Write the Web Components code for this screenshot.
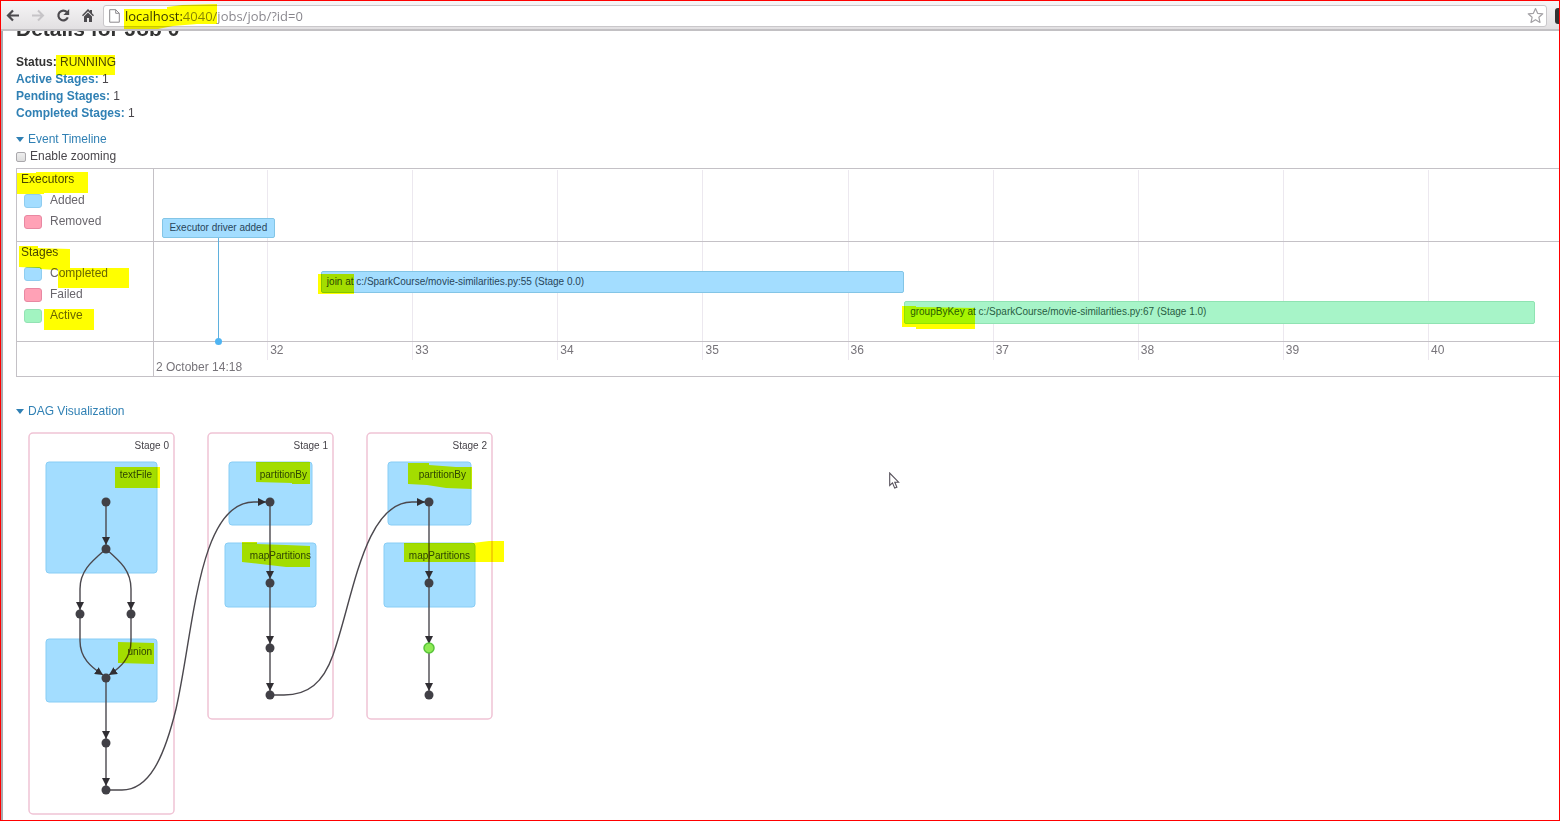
<!DOCTYPE html>
<html lang="en">
<head>
<meta charset="utf-8">
<title>Details for Job 0</title>
<style>
  body {
    margin: 0;
    background: #fff;
    color: #4a474c;
    font: 12px/17px "Liberation Sans", Arial, sans-serif;
  }
</style>
</head>
<body>
<spark-window>
  <browser-bar slot="bar" url="localhost:4040/jobs/job/?id=0"></browser-bar>
  <job-summary></job-summary>
  <fold-section label="Event Timeline">
    <event-timeline></event-timeline>
  </fold-section>
  <fold-section label="DAG Visualization" class="dag">
    <dag-graph></dag-graph>
  </fold-section>
</spark-window>

<script>
// Small base class: puts the markup into an open shadow root
class BaseElement extends HTMLElement {
  constructor() {
    super();
    this.attachShadow({ mode: 'open' });
  }

  connectedCallback() {
    this.shadowRoot.innerHTML = this.render();
  }
}

// Highlighter stroke over the text, blended like a real pen
class MarkerPen extends BaseElement {
  render() {
    return `
      <style>
        :host { position: absolute; left: 0; top: 0; mix-blend-mode: multiply; pointer-events: none; line-height: 0; }
        svg { width: 1px; height: 1px; overflow: visible; }
      </style>
      <svg aria-hidden="true"><polygon points="${this.getAttribute('points')}" fill="#ff0"/></svg>
    `;
  }
}

class SparkWindow extends BaseElement {
  render() {
    return `
      <style>
        :host { display: flex; flex-direction: column; height: 100vh; position: relative; overflow: hidden; }
        main { flex: 1; min-height: 0; overflow: hidden; margin-left: 1px; padding-left: 13px; border-left: 2px solid #aaa7ac; }
        .frame { position: absolute; inset: 0; border: 1px solid #f00; pointer-events: none; }
        .cursor { position: absolute; left: 889px; top: 472px; }
      </style>
      <slot name="bar"></slot>
      <main><slot></slot></main>
      <svg class="cursor" width="11" height="18" viewBox="0 0 11 18" aria-hidden="true">
        <path d="M.7 1v12.4l2.8-2.5 2.2 5.2 2.2-.9-2.1-5h3.8z" fill="#fff" stroke="#55505a" stroke-width="1.1"/>
      </svg>
      <div class="frame"></div>
    `;
  }
}

class BrowserBar extends BaseElement {
  render() {
    return `
      <style>
        :host {
          display: flex; align-items: center; gap: 8px; height: 31px; flex: none; box-sizing: border-box;
          padding: 2px 0 0 5px; background: linear-gradient(#f7f6f7, #e2e0e2); border-bottom: 2px solid #c2c0c3;
        }
        button { all: unset; display: flex; width: 17px; height: 17px; }
        .box {
          flex: 1; position: relative; display: flex; align-items: center; gap: 5px; height: 20px;
          border: 1px solid #c9c7ca; border-radius: 3px; background: #fff; padding: 0 2px 0 5px; margin-left: -2px;
        }
        input {
          all: unset; flex: 1; min-width: 0; height: 20px; font: 13px/20px "Open Sans", "Noto Sans", sans-serif;
          color: #777; -webkit-text-fill-color: transparent;
          background: linear-gradient(90deg, #333 58px, #85838a 58px);
          -webkit-background-clip: text; background-clip: text;
        }
        .ext { width: 5px; height: 16px; border-radius: 3px 0 0 3px; background: #333; }
        nav { display: flex; gap: 8px; }
      </style>
      <nav>
        <button aria-label="Back"><svg width="17" height="17" viewBox="0 0 17 17"><path d="M14 8.5H3M8 3.5l-5 5 5 5" fill="none" stroke="#4c4a4e" stroke-width="2.2"/></svg></button>
        <button aria-label="Forward"><svg width="17" height="17" viewBox="0 0 17 17"><path d="M2 8.5h11M8 3.5l5 5-5 5" fill="none" stroke="#c6c4c7" stroke-width="2"/></svg></button>
        <button aria-label="Reload"><svg width="17" height="17" viewBox="0 0 17 17"><path d="M12.8 10.4A4.9 4.9 0 1 1 11.8 5" fill="none" stroke="#4c4a4e" stroke-width="2.2"/><path d="M14.2 2v6H8.4z" fill="#4c4a4e"/></svg></button>
        <button aria-label="Home"><svg width="17" height="17" viewBox="0 0 17 17"><path d="M8 2 2 8.2l1 1 5-5 5 5 1-1-2-2V3h-2v1z M4 9.4V15h3v-4h2v4h3V9.4L8 5.6z" fill="#4c4a4e"/></svg></button>
      </nav>
      <div class="box">
        <svg width="11" height="14" viewBox="0 0 11 14"><path d="M.7.7h6l3.6 3.6v8.9H.7zM6.7.7v3.6h3.6" fill="none" stroke="#8b898d"/></svg>
        <input type="text" aria-label="Address" value="${this.getAttribute('url')}">
        <button aria-label="Bookmark"><svg width="17" height="17" viewBox="0 0 17 17"><path d="M8.5 1.5l2.1 4.8 5.2.5-3.9 3.5 1.1 5.1-4.5-2.7L4 15.4l1.1-5.1L1.2 6.8l5.2-.5z" fill="none" stroke="#a3a1a5" stroke-width="1.2" stroke-linejoin="round"/></svg></button>
        <marker-pen points="20,0 63,0 63,-2 78,-4 113,-5 113,15 93,15 69,17 54,20 20,20"></marker-pen>
      </div>
      <div class="ext"></div>
    `;
  }
}

class JobSummary extends BaseElement {
  render() {
    const rows = [['Active Stages:', 1], ['Pending Stages:', 1], ['Completed Stages:', 1]];
    return `
      <style>
        :host { display: block; }
        h3 { margin: -14px 0 13px; font-size: 21px; line-height: 24px; color: #333; }
        ul { list-style: none; margin: 0; padding: 0; position: relative; }
        strong { color: #333; }
        a { color: #3080b4; font-weight: bold; text-decoration: none; }
      </style>
      <h3>Details for Job 0</h3>
      <ul>
        <li><strong>Status:</strong> RUNNING</li>
        ${rows.map(([label, n]) => `<li><a href="#">${label}</a> ${n}</li>`).join('')}
        <marker-pen points="40,-2 99,-2 99,18 40,18"></marker-pen>
      </ul>
    `;
  }
}

class FoldSection extends BaseElement {
  render() {
    return `
      <style>
        :host { display: block; margin-top: 9px; }
        :host(.dag) { margin-top: 26px; }
        a { display: flex; align-items: center; gap: 4px; color: #3080b4; text-decoration: none; }
        a::before { content: ""; border: 4px solid transparent; border-top: 5px solid #3080b4; border-bottom: 0; }
      </style>
      <a href="#">${this.getAttribute('label')}</a>
      <slot></slot>
    `;
  }
}

class LegendBox extends BaseElement {
  render() {
    const colors = {
      blue: ['#a3ddff', '#8fcdf0'],
      red: ['#ffa1b6', '#e888a2'],
      green: ['#a2f4c1', '#93e2b4']
    };
    const items = this.getAttribute('items').split(',').map(item => item.split(':'));
    return `
      <style>
        :host { display: block; padding: 2px 4px 0; }
        ul { list-style: none; margin: 2px 0 0; padding: 0 0 0 3px; }
        li { display: flex; align-items: center; gap: 8px; height: 21px; color: #69666c; }
        i { box-sizing: border-box; width: 18px; height: 14px; border-radius: 3px; border: 1px solid; }
      </style>
      ${this.getAttribute('label')}
      <ul>
        ${items.map(([name, c]) => `<li><i style="background:${colors[c][0]};border-color:${colors[c][1]}"></i>${name}</li>`).join('')}
      </ul>
    `;
  }
}

class EventTimeline extends BaseElement {
  render() {
    const seconds = [32, 33, 34, 35, 36, 37, 38, 39, 40];
    return `
      <style>
        :host { display: block; }
        label { display: flex; align-items: center; gap: 4px; }
        input { appearance: none; width: 10px; height: 10px; margin: 0; border: 1px solid #aaa8ac; border-radius: 2px; background: linear-gradient(#eee, #ddd); }
        .chart {
          --start: 31.22; --span: 9.69;
          display: grid; grid-template-columns: 137px 1fr; grid-template-rows: 73px 100px 34px;
          margin-top: 3px; border: 1px solid #c4c1c6; border-right: 0; position: relative; overflow: hidden;
        }
        legend-box, .corner { border-right: 1px solid #c4c1c6; }
        .row { border-bottom: 1px solid #c4c1c6; }
        .track { position: relative; }
        .ticks { grid-area: 1 / 2 / 4 / 3; position: relative; color: #77747a; }
        .tick {
          position: absolute; top: 1px; height: 190px; box-sizing: border-box; padding: 172px 0 0 2px; border-left: 1px solid #ece8ef;
          left: calc((var(--t) - var(--start)) / var(--span) * 100%);
        }
        .date { position: absolute; left: 2px; top: 190px; }
        .item {
          position: absolute; box-sizing: border-box; height: 22px; padding: 0 5px; border: 1px solid #83c5e6; border-radius: 2px;
          background: #a3ddff; color: #28455a; font-size: 10px; line-height: 19px; white-space: nowrap;
          left: calc((var(--t) - var(--start)) / var(--span) * 100%);
          width: calc((var(--end) - var(--t)) / var(--span) * 100%);
        }
        .active { height: 23px; background: #a7f4c8; border-color: #8fe3b2; color: #285c42; }
        .point { height: 20px; line-height: 18px; width: 113px; margin-left: -56px; text-align: center; }
        .stem { position: absolute; z-index: 1; width: 1px; height: 103px; background: #5fb0dd; left: calc((var(--t) - var(--start)) / var(--span) * 100%); }
        .stem::after { content: ""; position: absolute; left: -3px; bottom: -4px; width: 7px; height: 7px; border-radius: 50%; background: #4fb4f2; }
      </style>
      <label><input type="checkbox"> Enable zooming</label>
      <div class="chart">
        <legend-box class="row" label="Executors" items="Added:blue,Removed:red" style="grid-area: 1 / 1"></legend-box>
        <legend-box class="row" label="Stages" items="Completed:blue,Failed:red,Active:green" style="grid-area: 2 / 1"></legend-box>
        <div class="corner" style="grid-area: 3 / 1"></div>
        <div class="ticks">
          ${seconds.map(s => `<div class="tick" style="--t:${s}">${s}</div>`).join('')}
          <div class="date">2 October 14:18</div>
        </div>
        <div class="track row" style="grid-area: 1 / 2">
          <div class="stem" style="--t:31.66; top:69px"></div>
          <div class="item point" style="--t:31.66; top:49px">Executor driver added</div>
        </div>
        <div class="track row" style="grid-area: 2 / 2">
          <div class="item" style="--t:32.37; --end:36.39; top:29px">join at c:/SparkCourse/movie-similarities.py:55 (Stage 0.0)
            <marker-pen points="-4,0 32,0 32,20 -4,20"></marker-pen></div>
          <div class="item active" style="--t:36.39; --end:40.74; top:59px">groupByKey at c:/SparkCourse/movie-similarities.py:67 (Stage 1.0)
            <marker-pen points="-3,2 11,2 11,3 70,4 70,25 11,25 11,23 -3,23"></marker-pen></div>
        </div>
        <marker-pen points="-1,1 19,1 19,0 71,0 71,21 27,21 27,22 -1,22"></marker-pen>
        <marker-pen points="2,74 21,74 21,76 53,77 53,96 39,97 39,98 23,97 23,96 2,95"></marker-pen>
        <marker-pen points="41,96 112,96 112,116 41,116"></marker-pen>
        <marker-pen points="27,137 77,137 77,158 27,158"></marker-pen>
      </div>
    `;
  }
}

// Stages as clusters of operations; coordinates are on the graph's own canvas
const stages = [
  { name: 'Stage 0', box: [13, 9, 145, 381], ops: [['textFile', 30, 38, 111, 111], ['union', 30, 215, 111, 63]],
    nodes: [[90, 78], [90, 125], [64, 190], [115, 190], [90, 254], [90, 319], [90, 366]] },
  { name: 'Stage 1', box: [192, 9, 125, 286], ops: [['partitionBy', 213, 38, 83, 63], ['mapPartitions', 209, 119, 91, 64]],
    nodes: [[254, 78], [254, 159], [254, 224], [254, 271]] },
  { name: 'Stage 2', box: [351, 9, 125, 286], ops: [['partitionBy', 372, 38, 83, 63], ['mapPartitions', 368, 119, 91, 64]],
    nodes: [[413, 78], [413, 159], [413, 224, 'cached'], [413, 271]] }
];

const edges = [
  'M90 78V121',
  'M90 125C75 138 64 147 64 165V186',
  'M90 125C105 138 115 147 115 165V186',
  'M64 190V217C64 234 75 243 87 251',
  'M115 190V217C115 234 105 243 93 251',
  'M90 254V315',
  'M90 319V362',
  'M90 366H106C133 366 148 334 160 285C178 206 182 78 238 78H250',
  'M254 78V155', 'M254 159V220', 'M254 224V267',
  'M254 271H268C292 271 307 259 317 231C337 175 348 78 396 78H409',
  'M413 78V155', 'M413 159V220', 'M413 224V267'
];

const strokes = [
  '99,43 144,43 144,64 99,64',
  '102,218 138,219 138,240 102,239',
  '240,38 294,38 294,60 276,60 276,59 240,58',
  '226,118 241,118 241,120 270,121 294,122 294,143 270,143 253,141 226,138',
  '392,39 413,39 413,41 440,43 456,43 456,65 430,64 411,61 392,60',
  '388,119 457,119 473,117 488,117 488,138 388,138'
];

class DagGraph extends BaseElement {
  render() {
    return `
      <style>
        :host { display: block; padding-top: 4px; }
        svg { display: block; overflow: visible; }
        text { font-size: 10px; fill: #454248; text-anchor: end; }
        .stage { fill: none; stroke: #f0c3d5; stroke-width: 1.5; }
        .op { fill: #a3ddff; stroke: #88cdf5; }
        .op-label { fill: #2e4552; }
        .node { fill: #414046; }
        .cached { fill: #8fea55; stroke: #58c43a; stroke-width: 1.5; }
        .edge { fill: none; stroke: #4b484e; stroke-width: 1.4; }
        .pen { fill: #ff0; mix-blend-mode: multiply; }
      </style>
      <svg width="490" height="395" role="img" aria-label="DAG of stages">
        <defs>
          <marker id="arrow" viewBox="0 0 8 8" refX="8" refY="4" markerWidth="8" markerHeight="8" markerUnits="userSpaceOnUse" orient="auto">
            <path d="M0 0 8 4 0 8z" fill="#302e33"/>
          </marker>
        </defs>
        ${stages.map(({ name, box: [x, y, w, h], ops }) => `
          <rect class="stage" x="${x}" y="${y}" width="${w}" height="${h}" rx="4"/>
          <text x="${x + w - 5}" y="${y + 16}">${name}</text>
          ${ops.map(([label, ox, oy, ow, oh]) => `
            <rect class="op" x="${ox}" y="${oy}" width="${ow}" height="${oh}" rx="3"/>
            <text class="op-label" x="${ox + ow - 5}" y="${oy + 16}">${label}</text>`).join('')}
        `).join('')}
        ${edges.map(d => `<path class="edge" d="${d}" marker-end="url(#arrow)"/>`).join('')}
        ${stages.flatMap(s => s.nodes).map(([x, y, cls]) =>
          `<circle class="${cls || 'node'}" cx="${x}" cy="${y}" r="${cls ? 5 : 4.5}"/>`).join('')}
        ${strokes.map(points => `<polygon class="pen" points="${points}"/>`).join('')}
      </svg>
    `;
  }
}

customElements.define('marker-pen', MarkerPen);
customElements.define('spark-window', SparkWindow);
customElements.define('browser-bar', BrowserBar);
customElements.define('job-summary', JobSummary);
customElements.define('fold-section', FoldSection);
customElements.define('legend-box', LegendBox);
customElements.define('event-timeline', EventTimeline);
customElements.define('dag-graph', DagGraph);
</script>
</body>
</html>
